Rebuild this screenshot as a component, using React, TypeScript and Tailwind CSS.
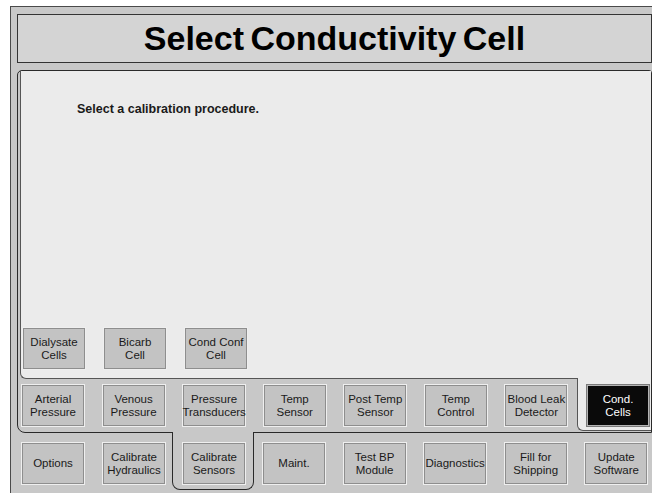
import type { ReactNode } from "react";

/**
 * Service screen: pick which conductivity cell to calibrate.
 * Three nested levels of tabs: main menu, sensor menu, cell menu.
 */

function Key({ children, active = false }: { children: ReactNode; active?: boolean }) {
  return (
    <div
      className={`flex h-[43px] w-[64px] shrink-0 items-center justify-center whitespace-nowrap border text-center text-[11.5px] leading-[13px] ${
        active
          ? "border-[#7a7a7a] bg-[#0a0a0a] text-white shadow-[inset_0_0_0_1px_#b4b4b4]"
          : "border-[#efefef] bg-[#c3c3c3] text-[#1a1a1a] shadow-[inset_0_0_0_1px_#8e8e8e]"
      }`}
    >
      <span>{children}</span>
    </div>
  );
}

export default function App() {
  return (
    <div className="h-[493px] w-[652px] overflow-hidden bg-white pl-[10px] pt-[6px] font-['Liberation_Sans',Arial,sans-serif]">
      <div className="h-full border-l border-t border-[#4a4a4a] bg-[#c8c8c8] pl-[6px] pt-[7px]">
        <div className="flex h-[49px] items-center justify-center border border-[#333] bg-[#d4d4d4] text-[34px] font-bold text-black [word-spacing:-3px]">
          Select Conductivity Cell
        </div>

        {/* sensor menu level */}
        <div className="mt-[7px] rounded-tl-[5px] rounded-tr-[3px] rounded-bl-[8px] border border-[#2a2a2a] pl-[2px]">
          {/* cell menu level */}
          <div className="flex h-[308px] flex-col rounded-bl-[6px] border-b border-l border-[#555] bg-[#ebebeb]">
            <p className="pl-[56px] pt-[29px] text-[12.5px] font-bold text-[#1a1a1a]">
              Select a calibration procedure.
            </p>
            <div className="flex-1" />
            <div className="ml-[1px] flex gap-[17px] pb-[8px]">
              <Key>Dialysate<br />Cells</Key>
              <Key>Bicarb<br />Cell</Key>
              <Key>Cond Conf<br />Cell</Key>
            </div>
          </div>

          <div className="flex h-[53px]">
            <div className="flex w-[557px] gap-[16.57px] pl-[1px] pt-[5px]">
              <Key>Arterial<br />Pressure</Key>
              <Key>Venous<br />Pressure</Key>
              <Key>Pressure<br />Transducers</Key>
              <Key>Temp<br />Sensor</Key>
              <Key>Post Temp<br />Sensor</Key>
              <Key>Temp<br />Control</Key>
              <Key>Blood Leak<br />Detector</Key>
            </div>
            <div className="-mt-px h-[53px] flex-1 rounded-bl-[6px] border-b border-l border-[#555] bg-[#ebebeb] pl-[8px] pt-[6px]">
              <Key active>Cond.<br />Cells</Key>
            </div>
          </div>
        </div>

        {/* main menu level */}
        <div className="flex">
          <div className="flex w-[155px] gap-[17px] pl-[4px] pt-[9px]">
            <Key>Options</Key>
            <Key>Calibrate<br />Hydraulics</Key>
          </div>
          <div className="-mt-px h-[58px] w-[82px] rounded-b-[8px] border-x border-b border-[#2a2a2a] bg-[#c8c8c8] pl-[9px] pt-[10px]">
            <Key>Calibrate<br />Sensors</Key>
          </div>
          <div className="flex gap-[16.57px] pl-[8px] pt-[9px]">
            <Key>Maint.</Key>
            <Key>Test BP<br />Module</Key>
            <Key>Diagnostics</Key>
            <Key>Fill for<br />Shipping</Key>
            <Key>Update<br />Software</Key>
          </div>
        </div>
      </div>
    </div>
  );
}
